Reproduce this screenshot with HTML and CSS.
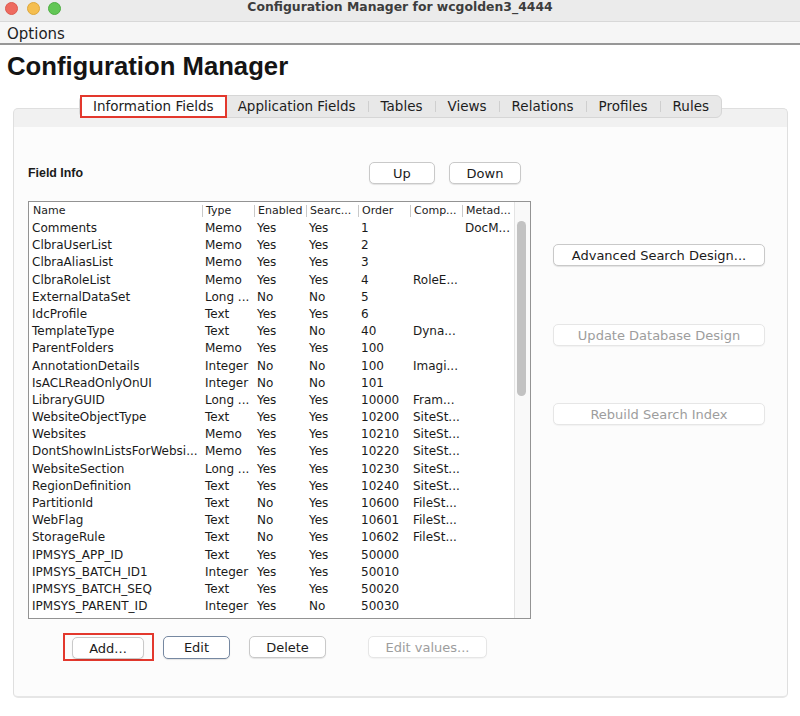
FILE: index.html
```html
<!DOCTYPE html>
<html>
<head>
<meta charset="utf-8">
<title>Configuration Manager</title>
<link rel="stylesheet" href="styles.css">
</head>
<body>
<div class="titlebar">
  <div class="lights"><span class="light red"></span><span class="light yellow"></span><span class="light green"></span></div>
  <div class="title">Configuration Manager for wcgolden3_4444</div>
  <div></div>
</div>
<div class="menubar"><span class="menu">Options</span></div>
<h1 class="heading">Configuration Manager</h1>
<div class="tabs-area">
  <div class="tabstrip">
    <div class="tab selected">Information Fields</div>
    <div class="tab">Application Fields</div>
    <span class="sep"></span>
    <div class="tab">Tables</div>
    <span class="sep"></span>
    <div class="tab">Views</div>
    <span class="sep"></span>
    <div class="tab">Relations</div>
    <span class="sep"></span>
    <div class="tab">Profiles</div>
    <span class="sep"></span>
    <div class="tab">Rules</div>
  </div>
  <div class="panel">
    <div class="left">
      <div class="fieldrow">
        <span class="label">Field Info</span>
        <button class="btn up">Up</button>
        <button class="btn down">Down</button>
      </div>
      <div class="table">
        <div class="grid">
          <div class="hrow">
            <div class="hcell first">Name</div><div class="hcell">Type</div><div class="hcell">Enabled</div><div class="hcell">Searc...</div><div class="hcell">Order</div><div class="hcell">Comp...</div><div class="hcell">Metad...</div>
          </div>
          <div class="row"><div class="cell">Comments</div><div class="cell">Memo</div><div class="cell">Yes</div><div class="cell">Yes</div><div class="cell">1</div><div class="cell"></div><div class="cell">DocM...</div></div>
          <div class="row"><div class="cell">ClbraUserList</div><div class="cell">Memo</div><div class="cell">Yes</div><div class="cell">Yes</div><div class="cell">2</div><div class="cell"></div><div class="cell"></div></div>
          <div class="row"><div class="cell">ClbraAliasList</div><div class="cell">Memo</div><div class="cell">Yes</div><div class="cell">Yes</div><div class="cell">3</div><div class="cell"></div><div class="cell"></div></div>
          <div class="row"><div class="cell">ClbraRoleList</div><div class="cell">Memo</div><div class="cell">Yes</div><div class="cell">Yes</div><div class="cell">4</div><div class="cell">RoleE...</div><div class="cell"></div></div>
          <div class="row"><div class="cell">ExternalDataSet</div><div class="cell">Long ...</div><div class="cell">No</div><div class="cell">No</div><div class="cell">5</div><div class="cell"></div><div class="cell"></div></div>
          <div class="row"><div class="cell">IdcProfile</div><div class="cell">Text</div><div class="cell">Yes</div><div class="cell">Yes</div><div class="cell">6</div><div class="cell"></div><div class="cell"></div></div>
          <div class="row"><div class="cell">TemplateType</div><div class="cell">Text</div><div class="cell">Yes</div><div class="cell">No</div><div class="cell">40</div><div class="cell">Dyna...</div><div class="cell"></div></div>
          <div class="row"><div class="cell">ParentFolders</div><div class="cell">Memo</div><div class="cell">Yes</div><div class="cell">Yes</div><div class="cell">100</div><div class="cell"></div><div class="cell"></div></div>
          <div class="row"><div class="cell">AnnotationDetails</div><div class="cell">Integer</div><div class="cell">No</div><div class="cell">No</div><div class="cell">100</div><div class="cell">Imagi...</div><div class="cell"></div></div>
          <div class="row"><div class="cell">IsACLReadOnlyOnUI</div><div class="cell">Integer</div><div class="cell">No</div><div class="cell">No</div><div class="cell">101</div><div class="cell"></div><div class="cell"></div></div>
          <div class="row"><div class="cell">LibraryGUID</div><div class="cell">Long ...</div><div class="cell">Yes</div><div class="cell">Yes</div><div class="cell">10000</div><div class="cell">Fram...</div><div class="cell"></div></div>
          <div class="row"><div class="cell">WebsiteObjectType</div><div class="cell">Text</div><div class="cell">Yes</div><div class="cell">Yes</div><div class="cell">10200</div><div class="cell">SiteSt...</div><div class="cell"></div></div>
          <div class="row"><div class="cell">Websites</div><div class="cell">Memo</div><div class="cell">Yes</div><div class="cell">Yes</div><div class="cell">10210</div><div class="cell">SiteSt...</div><div class="cell"></div></div>
          <div class="row"><div class="cell">DontShowInListsForWebsi...</div><div class="cell">Memo</div><div class="cell">Yes</div><div class="cell">Yes</div><div class="cell">10220</div><div class="cell">SiteSt...</div><div class="cell"></div></div>
          <div class="row"><div class="cell">WebsiteSection</div><div class="cell">Long ...</div><div class="cell">Yes</div><div class="cell">Yes</div><div class="cell">10230</div><div class="cell">SiteSt...</div><div class="cell"></div></div>
          <div class="row"><div class="cell">RegionDefinition</div><div class="cell">Text</div><div class="cell">Yes</div><div class="cell">Yes</div><div class="cell">10240</div><div class="cell">SiteSt...</div><div class="cell"></div></div>
          <div class="row"><div class="cell">PartitionId</div><div class="cell">Text</div><div class="cell">No</div><div class="cell">Yes</div><div class="cell">10600</div><div class="cell">FileSt...</div><div class="cell"></div></div>
          <div class="row"><div class="cell">WebFlag</div><div class="cell">Text</div><div class="cell">No</div><div class="cell">Yes</div><div class="cell">10601</div><div class="cell">FileSt...</div><div class="cell"></div></div>
          <div class="row"><div class="cell">StorageRule</div><div class="cell">Text</div><div class="cell">No</div><div class="cell">Yes</div><div class="cell">10602</div><div class="cell">FileSt...</div><div class="cell"></div></div>
          <div class="row"><div class="cell">IPMSYS_APP_ID</div><div class="cell">Text</div><div class="cell">Yes</div><div class="cell">Yes</div><div class="cell">50000</div><div class="cell"></div><div class="cell"></div></div>
          <div class="row"><div class="cell">IPMSYS_BATCH_ID1</div><div class="cell">Integer</div><div class="cell">Yes</div><div class="cell">Yes</div><div class="cell">50010</div><div class="cell"></div><div class="cell"></div></div>
          <div class="row"><div class="cell">IPMSYS_BATCH_SEQ</div><div class="cell">Text</div><div class="cell">Yes</div><div class="cell">Yes</div><div class="cell">50020</div><div class="cell"></div><div class="cell"></div></div>
          <div class="row"><div class="cell">IPMSYS_PARENT_ID</div><div class="cell">Integer</div><div class="cell">Yes</div><div class="cell">No</div><div class="cell">50030</div><div class="cell"></div><div class="cell"></div></div>
        </div>
        <div class="scroll"><div class="thumb"></div></div>
      </div>
      <div class="actions">
        <span class="mark"><button class="btn add">Add...</button></span>
        <button class="btn default edit">Edit</button>
        <button class="btn delete">Delete</button>
        <button class="btn disabled editvals">Edit values...</button>
      </div>
    </div>
    <div class="right">
      <button class="btn wide">Advanced Search Design...</button>
      <button class="btn wide disabled upd">Update Database Design</button>
      <button class="btn wide disabled rebuild">Rebuild Search Index</button>
    </div>
  </div>
</div>
</body>
</html>
```

FILE: styles.css
```css
* { box-sizing: border-box; }

body {
  margin: 0;
  width: 800px;
  height: 716px;
  overflow: hidden;
  background: #ffffff;
  font-family: "DejaVu Sans", sans-serif;
  color: #1d1d1d;
}

/* window chrome */
.titlebar {
  height: 22px;
  background: #ebebeb;
  border-bottom: 1px solid #d8d8d8;
  display: grid;
  grid-template-columns: 1fr auto 1fr;
  align-items: start;
}
.lights {
  display: flex;
  gap: 8.5px;
  padding: 2px 0 0 5px;
}
.light {
  width: 13px;
  height: 13px;
  border-radius: 50%;
}
.red { background: #ee6a5f; border: 1px solid #dc5a4f; }
.yellow { background: #f5be4f; border: 1px solid #dea73a; }
.green { background: #62c655; border: 1px solid #4fae43; }
.title {
  font-weight: bold;
  font-size: 12.4px;
  line-height: 14px;
  color: #3d3d3d;
}

.menubar {
  height: 23px;
  background: #f6f6f6;
  border-bottom: 2px solid #979797;
  padding: 2px 0 0 7px;
}
.menu {
  font-size: 15px;
  line-height: 19px;
  color: #1e1e1e;
}

.heading {
  margin: 6px 0 0 7px;
  font-family: "Liberation Sans", Arial, sans-serif;
  font-weight: bold;
  font-size: 25.7px;
  line-height: 30px;
  color: #141414;
}

/* tabs */
.tabs-area {
  margin: 14px 12px 0 13px;
}
.tabstrip {
  position: relative;
  z-index: 1;
  width: fit-content;
  margin: 0 auto -10px;
  height: 23px;
  display: flex;
  align-items: center;
  background: #e8e8e8;
  border: 1px solid #d6d6d6;
  border-radius: 6px;
}
.tab {
  font-size: 13.5px;
  line-height: 21px;
  padding: 0 12px;
  color: #1d1d1d;
}
.tab.selected {
  background: #ffffff;
  border-radius: 0;
  outline: 2px solid #e3382d;
  outline-offset: -1px;
  margin-left: 1px;
}
.sep {
  width: 1px;
  height: 11px;
  background: #cfcfcf;
}

.panel {
  height: 590px;
  border: 1px solid #dfdfdf;
  border-bottom: 2px solid #e6e6e6;
  border-radius: 5px;
  background: linear-gradient(#f1f1f1 0, #f1f1f1 18px, #fcfcfc 18px);
  display: flex;
  padding: 53px 0 0 14px;
}

/* buttons */
.btn {
  height: 22px;
  margin: 0;
  padding: 0;
  border: 1px solid #c9c9c9;
  border-radius: 5px;
  background: #ffffff;
  box-shadow: 0 1px 1px rgba(0, 0, 0, 0.10);
  font-family: "DejaVu Sans", sans-serif;
  font-size: 13px;
  color: #1b1b1b;
  display: flex;
  align-items: center;
  justify-content: center;
}
.btn.disabled {
  color: #9d9d9d;
  border-color: #e6e6e6;
  box-shadow: 0 1px 1px rgba(0, 0, 0, 0.04);
}
.btn.default {
  height: 23px;
  border: 1.5px solid #7688a1;
}

/* left column */
.left {
  width: 503px;
  display: flex;
  flex-direction: column;
}
.fieldrow {
  display: flex;
  align-items: center;
  height: 22px;
}
.label {
  flex: 1;
  font-family: "Liberation Sans", Arial, sans-serif;
  font-weight: bold;
  font-size: 12.4px;
  color: #1a1a1a;
}
.up { width: 66px; }
.down { width: 72px; margin: 0 10px 0 14px; }

.table {
  margin-top: 17px;
  height: 418px;
  border: 1px solid #939393;
  background: #ffffff;
  display: flex;
}
.grid {
  width: 485px;
  display: flex;
  flex-direction: column;
}
.hrow, .row {
  display: grid;
  grid-template-columns: 173px repeat(6, 52px);
}
.hrow {
  height: 18px;
}
.hcell {
  font-size: 11px;
  line-height: 18px;
  padding-left: 4px;
  color: #222222;
  white-space: nowrap;
  overflow: hidden;
  background: linear-gradient(#c9c9c9, #c9c9c9) left center / 1px 12px no-repeat;
}
.hcell.first {
  background: none;
  padding-left: 4px;
}
.row {
  height: 17.2px;
}
.cell {
  font-size: 12px;
  line-height: 17.2px;
  padding-left: 3px;
  color: #1a1a1a;
  white-space: nowrap;
  overflow: hidden;
}
.scroll {
  width: 16px;
  background: #f9f9f9;
  border-left: 1px solid #e4e4e4;
  padding: 19px 0 0 2px;
}
.thumb {
  width: 9px;
  height: 175px;
  border-radius: 5px;
  background: #c2c2c2;
}

.actions {
  margin-top: 14px;
  display: flex;
  align-items: center;
  padding-left: 35px;
}
.mark {
  display: inline-flex;
  border: 2px solid #e3382d;
  padding: 2px 8px 0 7px;
}
.add { width: 72px; }
.edit { width: 67px; margin-left: 9px; }
.delete { width: 77px; margin-left: 19px; }
.editvals { width: 119px; margin-left: 42px; }

/* right column */
.right {
  margin-left: 22px;
  padding-top: 82px;
  display: flex;
  flex-direction: column;
}
.wide { width: 212px; }
.upd { margin-top: 58px; }
.rebuild { margin-top: 57px; }
```
